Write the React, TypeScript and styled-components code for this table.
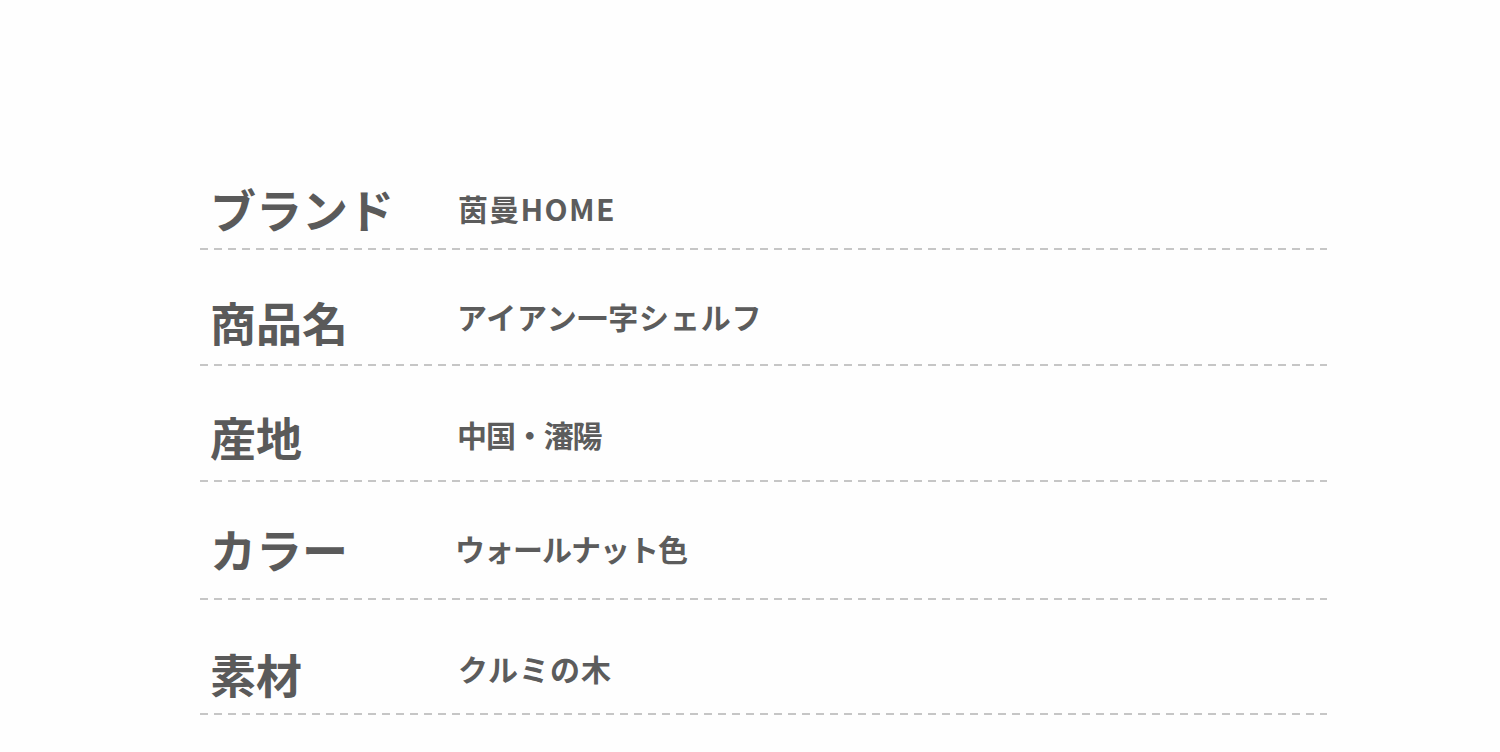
import React from 'react';
import styled, { createGlobalStyle } from 'styled-components';

const GlobalStyle = createGlobalStyle`
  html, body {
    margin: 0;
    padding: 0;
    background: #fefefe;
  }
  body {
    font-family: 'Noto Sans CJK JP', 'Noto Sans', sans-serif;
  }
`;

const Page = styled.div`
  width: 1500px;
  height: 752px;
  box-sizing: border-box;
  padding: 134px 0 0 200px;
  overflow: hidden;
`;

const Table = styled.div`
  width: 1127px;
  display: flex;
  flex-direction: column;
`;

const Row = styled.div<{ $height: number }>`
  height: ${({ $height }) => $height}px;
  box-sizing: border-box;
  display: flex;
  flex-direction: column;
  justify-content: flex-end;
`;

const Content = styled.div`
  display: flex;
  align-items: flex-end;
  padding-left: 10px;
`;

const Label = styled.div<{ $lift: number }>`
  width: 248px;
  font-size: 46px;
  line-height: 46px;
  font-weight: 700;
  color: #5a5a5a;
  margin-bottom: ${({ $lift }) => $lift}px;
`;

const Value = styled.div<{ $shift: number; $lift: number; $spacing: number }>`
  font-size: 30px;
  line-height: 30px;
  font-weight: 700;
  color: #5c5c5c;
  letter-spacing: ${({ $spacing }) => $spacing}px;
  margin-left: ${({ $shift }) => $shift}px;
  margin-bottom: ${({ $lift }) => $lift}px;
`;

const Dashes = styled.div`
  height: 2px;
  background-image: repeating-linear-gradient(
    to right,
    #c6c6c6 0,
    #c6c6c6 8px,
    transparent 8px,
    transparent 14px
  );
`;

const ROWS = [
  { label: 'ブランド', value: '茵曼HOME', shift: 0, spacing: 1.3, height: 116, labelLift: 17, valueLift: 25 },
  { label: '商品名', value: 'アイアン一字シェルフ', shift: -1, spacing: 0.8, height: 116, labelLift: 20, valueLift: 33 },
  { label: '産地', value: '中国・瀋陽', shift: -1, spacing: -1.1, height: 116, labelLift: 21, valueLift: 31 },
  { label: 'カラー', value: 'ウォールナット色', shift: -3, spacing: -1, height: 118, labelLift: 27, valueLift: 35 },
  { label: '素材', value: 'クルミの木', shift: 0, spacing: 1, height: 115, labelLift: 17, valueLift: 30 },
];

export default function App() {
  return (
    <>
      <GlobalStyle />
      <Page>
        <Table>
          {ROWS.map((row) => (
            <Row key={row.label} $height={row.height}>
              <Content>
                <Label $lift={row.labelLift}>{row.label}</Label>
                <Value $shift={row.shift} $lift={row.valueLift} $spacing={row.spacing}>
                  {row.value}
                </Value>
              </Content>
              <Dashes />
            </Row>
          ))}
        </Table>
      </Page>
    </>
  );
}
